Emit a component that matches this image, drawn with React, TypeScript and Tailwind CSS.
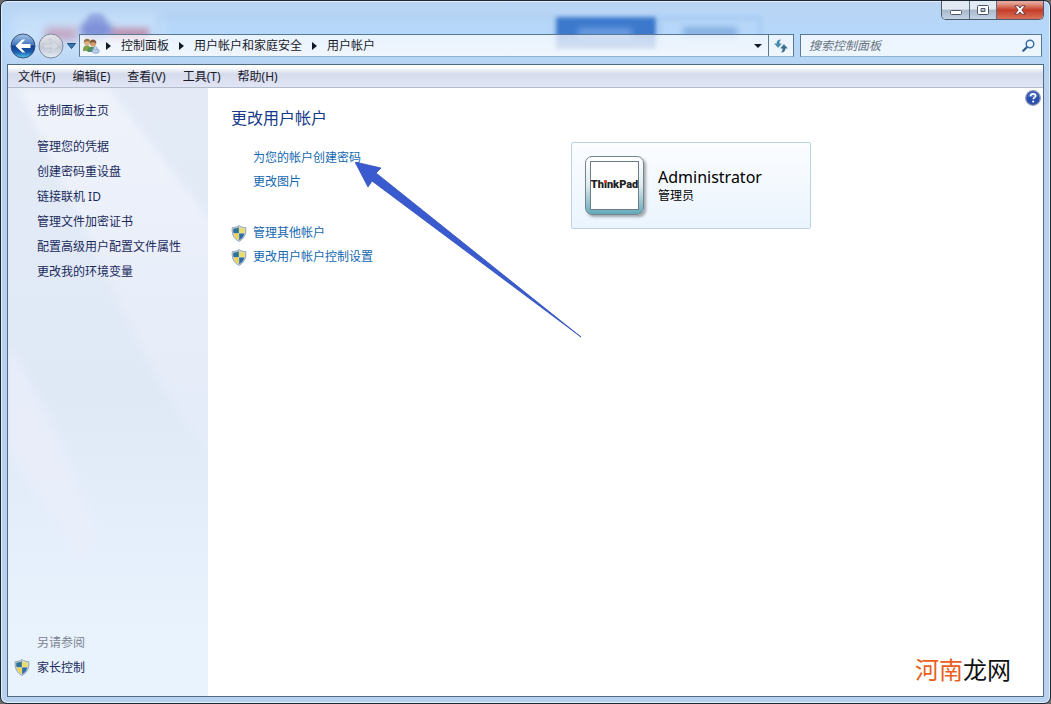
import type { ReactNode } from "react";

const MENU = ["文件(F)", "编辑(E)", "查看(V)", "工具(T)", "帮助(H)"];
const CRUMBS = ["控制面板", "用户帐户和家庭安全", "用户帐户"];
const TASKS = [
  "管理您的凭据",
  "创建密码重设盘",
  "链接联机 ID",
  "管理文件加密证书",
  "配置高级用户配置文件属性",
  "更改我的环境变量",
];

function Shield() {
  return (
    <svg viewBox="0 0 16 17" className="h-[17px] w-4 shrink-0" aria-hidden="true">
      <path d="M8 .6C6 2 3.500 2.700 1.200 2.700.7 9 2.600 13.600 8 16.400 13.400 13.600 15.300 9 14.800 2.700 12.500 2.700 10 2 8 .6z" fill="#d3dde6" stroke="#8a9cab" strokeWidth=".9" />
      <path d="M7.800 2C6.200 3 4.300 3.600 2.200 3.700c-.1 1.700 0 3.200.3 4.600h5.300z" fill="#2f7496" />
      <path d="M8.200 2c1.600 1 3.500 1.600 5.600 1.700.1 1.700 0 3.200-.3 4.600H8.200z" fill="#ecdc68" />
      <path d="M2.600 8.500h5.200v6.800C5 13.800 3.300 11.500 2.600 8.500z" fill="#f0d254" />
      <path d="M13.400 8.500H8.200v6.800c2.800-1.500 4.500-3.800 5.200-6.800z" fill="#2d6da6" />
    </svg>
  );
}

function UsersIcon() {
  return (
    <svg viewBox="0 0 18 16" className="h-4 w-[18px]" aria-hidden="true">
      <path d="M1 13c-.3-3.500 1-5.600 3.600-5.800C7.500 7.200 9 9 9 13z" fill="#7fa04b" />
      <circle cx="5" cy="4.400" r="3" fill="#d9b184" />
      <path d="M1.800 4.500C1.700 2 3.200.8 5 .8s3.300 1.100 3.200 3.200C6.800 3 4 3 1.800 4.500z" fill="#98723f" />
      <path d="M5.500 14c-.2-3.500 1.600-5.300 4.500-5.300S14.700 10.500 14.700 14z" fill="#4d9166" />
      <circle cx="11" cy="5.500" r="3.100" fill="#cf9e70" />
      <path d="M7.800 5.500C7.600 2.900 9.200 1.600 11 1.600s3.600 1.300 3.300 3.900C12.400 4 9.800 3.800 7.800 5.500z" fill="#80553a" />
      <ellipse cx="13.700" cy="13" rx="3.600" ry="2.400" fill="#b7cdec" stroke="#7c96c0" strokeWidth=".6" />
      <circle cx="13.400" cy="10.200" r="1.700" fill="#c2d6f0" stroke="#7c96c0" strokeWidth=".5" />
    </svg>
  );
}

function Crumb({ children }: { children: ReactNode }) {
  return (
    <li className="flex items-center">
      <svg viewBox="0 0 5 8" className="mx-2.5 h-2 w-[5px]" aria-hidden="true">
        <path d="M0 0l5 4-5 4z" fill="#111827" />
      </svg>
      <a href="#" className="whitespace-nowrap">{children}</a>
    </li>
  );
}

// blurred page that shines through the glass title bar
function GlassBackdrop() {
  return (
    <div className="pointer-events-none absolute inset-x-0 top-0 h-16 overflow-hidden" aria-hidden="true">
      <div className="absolute left-[10px] top-[14px] h-10 w-[150px] bg-white/25 blur-[8px]" />
      <div className="absolute left-[44px] top-[27px] h-3 w-8 bg-[#c08aa8] opacity-70 blur-[4px]" />
      <div className="absolute left-[108px] top-[27px] h-3 w-10 bg-[#b97a9d] opacity-75 blur-[3px]" />
      <div className="absolute left-[79px] top-[19px] h-5 w-8 rounded-full bg-[#6f80d0] opacity-80 blur-[3px]" />
      <div className="absolute left-[86px] top-[12px] h-3 w-[18px] rounded-full bg-[#7f90d8] opacity-60 blur-[2px]" />
      <div className="absolute left-[156px] top-4 h-9 w-[396px] border border-[#a5c8ec] blur-[2px]" />
      <div className="absolute left-[555px] top-4 h-8 w-[100px] bg-[#3c79cc] blur-[2px]" />
      <div className="absolute left-[577px] top-[27px] h-2.5 w-[54px] bg-[#6a9be0] blur-[3px]" />
      <div className="absolute left-[658px] top-4 h-8 w-[102px] border-2 border-[#9cc4f0] blur-[2px]" />
      <div className="absolute left-[682px] top-[26px] h-2.5 w-[54px] bg-[#86b0e2] blur-[3px]" />
    </div>
  );
}

function WindowButtons() {
  return (
    <div className="flex h-[19px] overflow-hidden rounded-b-[5px] border border-t-0 border-[#4c5a6e]">
      <button aria-label="最小化" className="flex w-[28px] items-center justify-center border-r border-[#5c6c82] bg-linear-to-b from-[#e2eaf3] from-45% via-[#a9b8c9] via-50% to-[#c2d3e6]">
        <svg viewBox="0 0 12 5" className="mt-1 h-[5px] w-3"><rect x=".5" y=".5" width="11" height="4" rx="1" fill="#fff" stroke="#4a5568" /></svg>
      </button>
      <button aria-label="最大化" className="flex w-[27px] items-center justify-center border-r border-[#5c6c82] bg-linear-to-b from-[#e2eaf3] from-45% via-[#a9b8c9] via-50% to-[#c2d3e6]">
        <svg viewBox="0 0 12 10" className="h-2.5 w-3"><path fillRule="evenodd" d="M1.500.5h9a1 1 0 011 1v7a1 1 0 01-1 1h-9a1 1 0 01-1-1v-7a1 1 0 011-1zM4 3.500v3h4v-3z" fill="#fff" stroke="#4a5568" /></svg>
      </button>
      <button aria-label="关闭" className="flex w-[46px] items-center justify-center bg-linear-to-b from-[#e6a396] from-10% via-[#c43a25] via-50% to-[#d9705a]">
        <svg viewBox="0 0 12 10" className="h-2.5 w-3"><path d="M.8.8h3.400L6 3 7.800.8h3.400L7.800 5l3.400 4.200H7.800L6 7 4.200 9.200H.8L4.200 5z" fill="#fff" stroke="#5b3540" strokeWidth=".9" /></svg>
      </button>
    </div>
  );
}

function NavButtons() {
  return (
    <div className="flex shrink-0 items-center">
      <button aria-label="后退">
        <svg viewBox="0 0 26 26" className="size-[26px]">
          <defs>
            <linearGradient id="back" x1="0" y1="0" x2="0" y2="1">
              <stop offset="0" stopColor="#a9c6ea" />
              <stop offset=".46" stopColor="#3f75bd" />
              <stop offset=".5" stopColor="#123f8c" />
              <stop offset=".75" stopColor="#1b5cae" />
              <stop offset="1" stopColor="#54cdf2" />
            </linearGradient>
          </defs>
          <circle cx="13" cy="13" r="12" fill="url(#back)" stroke="#3b4f73" />
          <path d="M12.300 6.500L5.500 13l6.800 6.500h3l-4.200-4.600H20.500v-3.800h-9.400l4.200-4.600z" fill="#fff" />
        </svg>
      </button>
      <button aria-label="前进" className="ml-0.5">
        <svg viewBox="0 0 26 26" className="size-[26px]">
          <defs>
            <linearGradient id="fwd" x1="0" y1="0" x2="0" y2="1">
              <stop offset="0" stopColor="#e3e4ea" />
              <stop offset=".48" stopColor="#cccfd8" />
              <stop offset=".52" stopColor="#bfc6d3" />
              <stop offset="1" stopColor="#e6edf6" />
            </linearGradient>
          </defs>
          <circle cx="13" cy="13" r="12" fill="url(#fwd)" stroke="#7c899e" />
          <path d="M13.700 6.500l6.800 6.500-6.800 6.500h-3l4.200-4.600H5.500v-3.800h9.400l-4.200-4.600z" fill="#d6dae3" stroke="#bcc3cf" strokeWidth=".6" />
        </svg>
      </button>
      <button aria-label="最近浏览" className="mx-[3px]">
        <svg viewBox="0 0 9 6" className="h-1.5 w-[9px]"><path d="M.5.5h8L4.500 5.500z" fill="#2f79bd" stroke="#274b78" /></svg>
      </button>
    </div>
  );
}

function AddressBar() {
  return (
    <div className="flex h-[23px] min-w-0 flex-1 border border-[#5a7894] border-b-[#8fb2d0] bg-linear-to-b from-white/70 to-white/80">
      <nav className="flex min-w-0 flex-1 items-center pl-0.5" aria-label="地址">
        <UsersIcon />
        <ol className="-ml-1 flex items-center">
          {CRUMBS.map((c) => (
            <Crumb key={c}>{c}</Crumb>
          ))}
        </ol>
      </nav>
      <button aria-label="历史记录" className="flex w-5 items-center justify-center">
        <svg viewBox="0 0 8 4" className="h-1 w-2"><path d="M0 0h8L4 4z" fill="#111827" /></svg>
      </button>
      <button aria-label="刷新" className="flex w-[25px] items-center justify-center border-l border-[#5a7894]">
        <svg viewBox="0 0 14 14" className="size-3.5">
          <path d="M6.500.8C3.800.8 2.900 2.300 2.900 4.800H.6l3.500 3.800L7.400 4.800H5.200c0-1.700.2-2.800 1.300-4z" fill="#3f8db0" stroke="#3a7894" strokeWidth=".4" />
          <path d="M7.500 13.200c2.700 0 3.600-1.500 3.600-4h2.300L9.900 5.400 6.600 9.200h2.200c0 1.700-.2 2.800-1.300 4z" fill="#3a6f90" stroke="#2d607f" strokeWidth=".4" />
        </svg>
      </button>
    </div>
  );
}

function SearchBox() {
  return (
    <form className="ml-1.5 flex h-[23px] w-[242px] shrink-0 items-center border border-[#5a7894] border-b-[#8fb2d0] bg-white/75 pr-1.5" onSubmit={(e) => e.preventDefault()}>
      <input
        type="text"
        aria-label="搜索控制面板"
        placeholder="搜索控制面板"
        className="min-w-0 flex-1 bg-transparent pl-2 text-xs italic outline-none placeholder:text-[#66727f]"
      />
      <button aria-label="搜索">
        <svg viewBox="0 0 13 13" className="size-[13px]">
          <path d="M5.300 7.700L1.300 11.700" stroke="#2c5a8c" strokeWidth="2.200" strokeLinecap="round" />
          <circle cx="8" cy="5" r="3.800" fill="#eef7ff" stroke="#3a6ea5" strokeWidth="1.500" />
        </svg>
      </button>
    </form>
  );
}

function Sidebar() {
  return (
    <aside className="relative flex w-[200px] shrink-0 flex-col bg-linear-to-b from-[#e4ebf7] via-[#dfe9f6] via-50% to-[#e8f3fe] to-90% pt-2.5 pb-4 leading-[25px] text-[#1b2a5c]">
      <svg viewBox="0 0 200 608" preserveAspectRatio="none" className="absolute inset-0 size-full" aria-hidden="true">
        <defs>
          <linearGradient id="shine" x1="0" y1="0" x2="0" y2="1">
            <stop offset="0" stopColor="#f2f5fc" stopOpacity=".8" />
            <stop offset="1" stopColor="#e9eefb" stopOpacity=".5" />
          </linearGradient>
          <filter id="soft"><feGaussianBlur stdDeviation="4" /></filter>
        </defs>
        <g filter="url(#soft)">
          <path d="M10 0h90l110 140v230C150 310 110 210 80 150z" fill="url(#shine)" />
          <path d="M0 255c30 50 60 110 90 195l-14 25C50 430 20 400 0 360z" fill="#ebeefb" fillOpacity=".8" />
        </g>
      </svg>
      <div className="relative flex flex-1 flex-col pl-[29px]">
        <a href="#" className="mb-[11px] self-start">控制面板主页</a>
        <ul>
          {TASKS.map((t) => (
            <li key={t}><a href="#">{t}</a></li>
          ))}
        </ul>
        <h2 className="mt-auto text-[#7b838f]">另请参阅</h2>
        <a href="#" className="-ml-[23px] flex items-center gap-[7px]">
          <Shield />
          家长控制
        </a>
      </div>
    </aside>
  );
}

function AccountCard() {
  return (
    <section className="flex h-[87px] w-[240px] shrink-0 items-center rounded-[2px] border border-[#bcd3e6] bg-linear-to-b from-[#fbfdff] to-[#ebf4fd] pl-[13px]">
      <div className="size-[59px] rounded-[7px] border border-[#75868f] bg-linear-to-b from-white via-[#dfeaee] to-[#62a9b9] p-1 shadow-[2px_2px_3px_#0005]">
        <div className="relative flex size-[49px] items-center justify-center border border-[#6b7d88] bg-white text-[11px] font-black text-[#222] [font-family:Roboto,'Liberation_Sans',sans-serif]">
          <span>Th<span className="relative">i<span className="absolute left-0 top-0.5 size-[3px] rounded-full bg-[#e2382c]" /></span>nkPad</span>
        </div>
      </div>
      <div className="ml-3.5 text-black">
        <p className="text-base leading-5">Administrator</p>
        <p className="text-xs leading-[18px]">管理员</p>
      </div>
    </section>
  );
}

function Content() {
  return (
    <main className="relative flex min-w-0 flex-1 bg-white pl-[23px] pt-[18px]">
      <div className="w-[340px] shrink-0 leading-6 text-[#1468b0]">
        <h1 className="mb-4 text-base leading-6 text-[#173a8a]">更改用户帐户</h1>
        <ul className="mb-[27px] pl-[22px]">
          <li><a href="#">为您的帐户创建密码</a></li>
          <li><a href="#">更改图片</a></li>
        </ul>
        <ul>
          <li><a href="#" className="flex items-center gap-1.5"><Shield />管理其他帐户</a></li>
          <li><a href="#" className="flex items-center gap-1.5"><Shield />更改用户帐户控制设置</a></li>
        </ul>
      </div>
      <div className="pt-9">
        <AccountCard />
      </div>

      <svg viewBox="0 0 228 176" className="pointer-events-none absolute left-[147px] top-[74px] h-[176px] w-[228px]" aria-hidden="true">
        <path d="M0 0l26 6-5 5 205 164L17 19l-4 6z" fill="#3a5bd0" stroke="#3150b4" strokeWidth=".8" />
      </svg>

      <button aria-label="帮助" className="absolute right-0.5 top-0.5">
        <svg viewBox="0 0 16 16" className="size-4">
          <circle cx="8" cy="8" r="7.300" fill="#2a4fae" stroke="#8a97b5" strokeWidth="1.300" />
          <path d="M3 6.500a5 4 0 0110 0C10 7.500 6 7.500 3 6.500z" fill="#6f92da" fillOpacity=".6" />
          <path d="M5.600 6.200C5.700 4.600 6.700 3.900 8.100 3.900c1.500 0 2.500.8 2.500 2.100 0 1.600-2.300 1.700-2.300 3.300" fill="none" stroke="#fff" strokeWidth="1.600" />
          <circle cx="8.200" cy="11.600" r="1.100" fill="#fff" />
        </svg>
      </button>

      <p className="absolute bottom-2 right-8 text-2xl leading-9 text-[#111]">
        <span className="text-[#e8601c]">河南</span>龙网
      </p>
    </main>
  );
}

export default function App() {
  return (
    <div className="h-screen bg-[#6c6a68] text-xs text-[#1a1a2a] [font-family:'Noto_Sans','Noto_Sans_CJK_SC',sans-serif]">
      <div className="relative flex h-full flex-col overflow-hidden rounded-[7px] border border-[#1c2736] bg-linear-to-b from-[#b9d4f3] via-[#b5d8fb] via-5% to-[#b9d1ee] to-12% px-1.5 pb-1.5 shadow-[inset_0_0_0_1px_#e3f0fc]">
        <GlassBackdrop />
        <header className="relative">
          <div className="flex h-8 justify-end">
            <WindowButtons />
          </div>
          <div className="flex h-[31px] items-start pl-[3px] pr-0.5">
            <div className="flex h-[26px] items-center"><NavButtons /></div>
            <div className="flex min-w-0 flex-1 pt-px">
              <AddressBar />
              <SearchBox />
            </div>
          </div>
        </header>
        <div className="relative flex min-h-0 flex-1 flex-col border border-[#4d6b85]">
          <div role="menubar" className="flex h-[23px] shrink-0 items-center gap-[17px] border-b border-[#b3bccb] bg-linear-to-b from-white from-10% via-[#d6dced] via-40% to-[#e1e5f5] pl-2.5 pt-0.5">
            {MENU.map((m) => (
              <button key={m} role="menuitem">{m}</button>
            ))}
          </div>
          <div className="flex min-h-0 flex-1">
            <Sidebar />
            <Content />
          </div>
        </div>
      </div>
    </div>
  );
}
